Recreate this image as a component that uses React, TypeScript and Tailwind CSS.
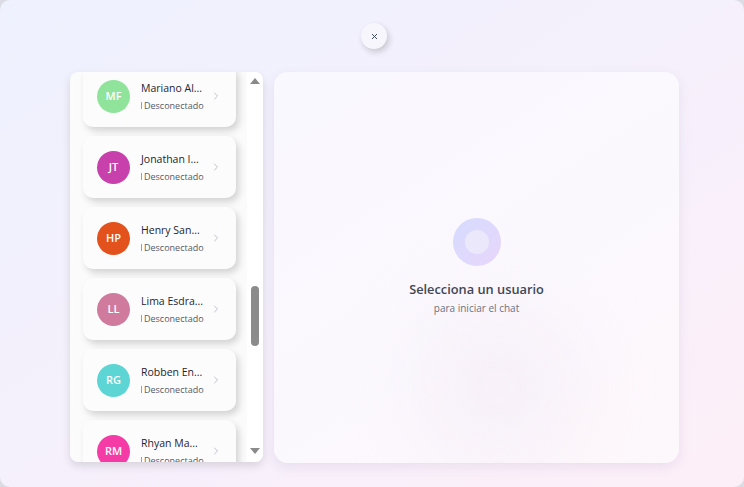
import { ChevronRight, X } from 'lucide-react';

interface User {
  initials: string;
  name: string;
  color: string;
}

const users: User[] = [
  { initials: 'MF', name: 'Mariano Al...', color: 'bg-[#8fe39b]' },
  { initials: 'JT', name: 'Jonathan I...', color: 'bg-[#c840ab]' },
  { initials: 'HP', name: 'Henry San...', color: 'bg-[#e3511d]' },
  { initials: 'LL', name: 'Lima Esdra...', color: 'bg-[#d07b9d]' },
  { initials: 'RG', name: 'Robben En...', color: 'bg-[#5cd5d4]' },
  { initials: 'RM', name: 'Rhyan Ma...', color: 'bg-[#f43ba6]' },
];

function UserCard({ user }: { user: User }) {
  return (
    <div className="flex h-[62px] w-[153px] shrink-0 items-center rounded-[10px] bg-[#fcfcfd] pl-[14px] pr-[14px] shadow-[3px_4px_7px_rgba(0,0,0,0.16)]">
      <div
        className={`flex h-[33px] w-[33px] shrink-0 items-center justify-center rounded-full text-[11px] font-semibold text-white ${user.color}`}
      >
        {user.initials}
      </div>
      <div className="ml-[11px] flex min-w-0 flex-1 flex-col">
        <span className="whitespace-nowrap text-[10.5px] leading-[14px] text-[#1f2430]">{user.name}</span>
        <span className="mt-[5px] flex items-center whitespace-nowrap text-[9px] leading-[12px] text-[#545b66]">
          <span className="mr-[2px] inline-block h-[7px] w-px bg-gray-400" />
          Desconectado
        </span>
      </div>
      <ChevronRight className="h-[12px] w-[12px] shrink-0 text-gray-400" strokeWidth={1.3} />
    </div>
  );
}

function Scrollbar() {
  return (
    <div className="flex w-[16px] shrink-0 flex-col items-center bg-white py-[4px]">
      <div className="mt-[2px] h-0 w-0 border-x-[5px] border-b-[6px] border-x-transparent border-b-[#8a8a8a]" />
      <div className="flex flex-1 flex-col pt-[202px]">
        <div className="h-[60px] w-[8px] rounded-full bg-[#8b8b8b]" />
      </div>
      <div className="mb-[4px] h-0 w-0 border-x-[5px] border-t-[6px] border-x-transparent border-t-[#8a8a8a]" />
    </div>
  );
}

export default function App() {
  return (
    <div className="h-[487px] w-[744px] overflow-hidden bg-[#dcdce4]" style={{ fontFamily: '"Open Sans", "Noto Sans", sans-serif' }}>
      <div className="relative flex h-full w-full flex-col rounded-[10px] bg-gradient-to-br from-[#eef1fe] via-[#f5f0fc] to-[#fdeff8]">
        <div className="flex h-[72px] shrink-0 justify-center pl-[4px] pt-[23px]">
          <button className="flex h-[26px] w-[26px] items-center justify-center rounded-full bg-[#f7f6fd] text-gray-700 shadow-[2px_3px_6px_rgba(0,0,0,0.18)]">
            <X className="h-[9px] w-[9px]" strokeWidth={2.5} />
          </button>
        </div>

        <div className="flex gap-[11px] pl-[70px]">
          <div className="flex h-[390px] w-[193px] overflow-hidden rounded-[8px] bg-[#fbfbfc] shadow-[0_4px_8px_rgba(0,0,0,0.12)]">
            <div className="flex flex-1 flex-col overflow-hidden pl-[13px]">
              <div className="-mt-[7px] flex flex-col gap-[9px]">
                {users.map((u) => (
                  <UserCard key={u.initials} user={u} />
                ))}
              </div>
            </div>
            <Scrollbar />
          </div>

          <div className="relative flex h-[391px] w-[405px] flex-col items-center justify-center overflow-hidden rounded-[14px] bg-white/55 shadow-[0_4px_12px_rgba(120,100,160,0.12)]">
            <div className="absolute left-[150px] top-[240px] h-[150px] w-[150px] rounded-full bg-[#f3eaf6] opacity-60 blur-2xl" />
            <div className="relative -mt-[2px] flex flex-col items-center">
              <div className="flex h-[48px] w-[48px] items-center justify-center rounded-full bg-gradient-to-br from-[#d5dcfe] to-[#e8d6fb]">
                <div className="h-[24px] w-[24px] rounded-full bg-[#ebe8fb]" />
              </div>
              <div className="mt-[14px] text-[12.8px] font-semibold leading-[18px] text-[#3f4654]">Selecciona un usuario</div>
              <div className="mt-[3px] text-[10px] leading-[14px] text-[#6b7280]">para iniciar el chat</div>
            </div>
          </div>
        </div>
      </div>
    </div>
  );
}
